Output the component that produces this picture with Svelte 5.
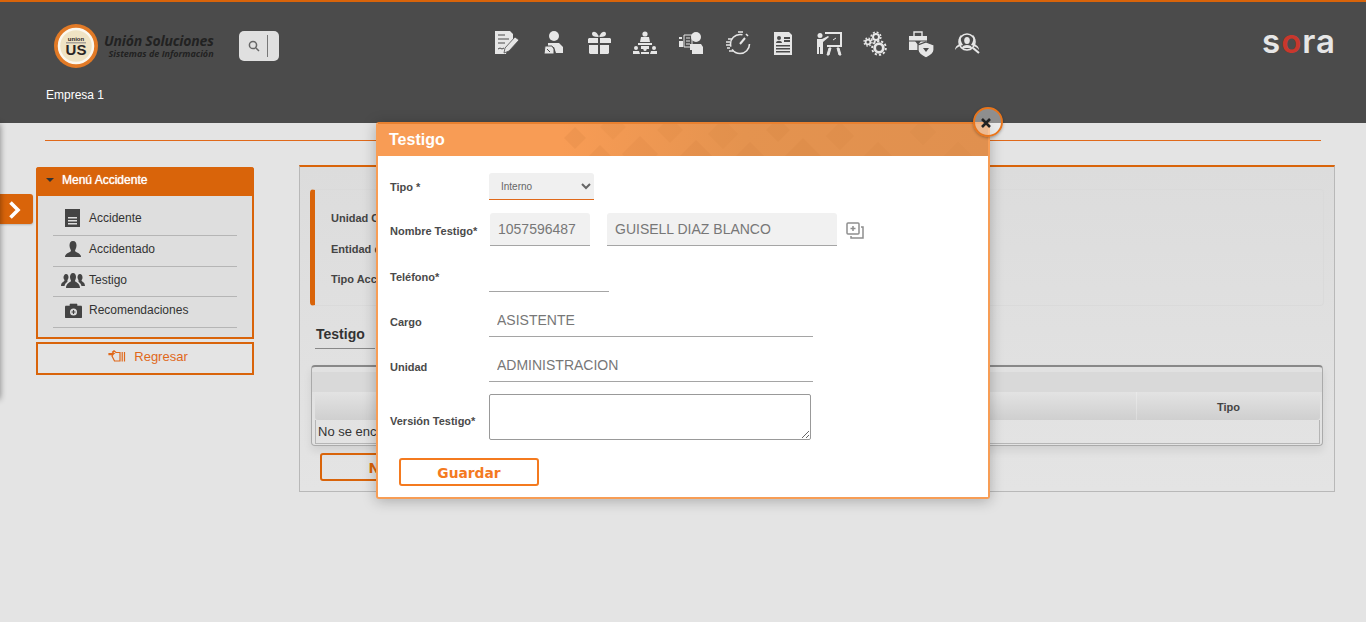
<script>
  const menu = ["Accidente", "Accidentado", "Testigo", "Recomendaciones"];
  const info = ["Unidad Centro Costo", "Entidad de Salud", "Tipo Accidente"];
  // diamonds on the modal title bar: x, y, half size, opacity
  const diamonds = [
    [197, 14, 11, 0.09], [235, 3, 13, 0.05], [222, 36, 15, 0.09], [262, 30, 18, 0.07],
    [292, 6, 13, 0.05], [318, 34, 18, 0.07], [345, 10, 15, 0.04], [372, 38, 20, 0.06],
    [400, 6, 12, 0.05], [425, 32, 18, 0.05], [462, 12, 14, 0.04], [500, 36, 18, 0.04],
    [545, 8, 13, 0.03], [580, 34, 16, 0.03]
  ];
</script>

<div class="page">
  <header class="topbar">
    <div class="brand-row">
      <div class="logo">
        <svg width="46" height="46" viewBox="0 0 46 46">
          <circle cx="23" cy="23" r="22" fill="#e27a26" />
          <circle cx="23" cy="23" r="17" fill="#efe3c4" stroke="#fbf8ef" stroke-width="2.500" />
          <text x="23" y="17.500" class="logo-small">union</text>
          <rect x="13" y="19" width="20" height="1.500" fill="#a9a39a" />
          <text x="23" y="32" class="logo-big">US</text>
        </svg>
        <div class="logo-text">
          <strong>Unión Soluciones</strong>
          <span>Sistemas de Información</span>
        </div>
      </div>
      <div class="search">
        <svg width="12" height="12" viewBox="0 0 12 12" fill="none" stroke="#666" stroke-width="1.500">
          <circle cx="5" cy="5" r="3.600" /><path d="M7.700 7.700L11 11" />
        </svg>
        <i></i>
      </div>
      <nav class="modules">
        <!-- document with pencil -->
        <svg viewBox="0 0 30 30"><path d="M3 3h15l3 3v8l-6 7-1 5H3z" /><path d="M6 7h7M6 11h11M6 15h7M6 21l2-1 2 1 2-1" stroke="#4b4b4b" stroke-width="1" fill="none" /><path d="M23 9l4 3-10 11-5 2 1-5z" stroke="#4b4b4b" stroke-width=".8" /></svg>
        <!-- person with file -->
        <svg viewBox="0 0 30 30"><circle cx="16" cy="8" r="5" /><path d="M10 15h11l4 4v6h-7l-2-6h-6z" /><path d="M7 18h7l2 3v5H6z" stroke="#4b4b4b" stroke-width="1" /><path d="M9 21l3 3" stroke="#4b4b4b" stroke-width="1" /></svg>
        <!-- gift -->
        <svg viewBox="0 0 30 30"><path d="M5 10h9v5H4v-4zM16 10h10l1 1v4H16zM5 17h9v9H6l-1-1zM16 17h9v8l-1 1h-8z" /><path d="M14 9c-4 0-6-1-6-3 0-3 4-3 6 1 1 1 1 2 0 2zM16 9c4 0 6-1 6-3 0-3-4-3-6 1-1 1-1 2 0 2z" /></svg>
        <!-- podium and audience -->
        <svg viewBox="0 0 30 30"><circle cx="15" cy="6" r="2.600" /><path d="M11 9h8l1 5H10zM8 15h14v2H8zM11 18h8v3h-8z" /><circle cx="6" cy="20" r="2" /><circle cx="15" cy="21.500" r="1.600" /><circle cx="24" cy="20" r="2" /><path d="M3 23h6l1 3H3zM11 24h8v2h-8zM21 23h6v3h-7z" /></svg>
        <!-- person with clipboard -->
        <svg viewBox="0 0 30 30"><circle cx="20" cy="9" r="5" /><path d="M14 16h11l2 3v7H16v-4h-2z" /><path d="M8 7h8v12H8z" fill="none" stroke="#e6e6e6" stroke-width="1" /><path d="M3 9h3v2H3zM3 13h4v6H3z" /><path d="M10 10h4M10 13h4M10 16h4" stroke="#e6e6e6" stroke-width="1" /></svg>
        <!-- stopwatch -->
        <svg viewBox="0 0 30 30" fill="none" stroke="#e6e6e6"><circle cx="18" cy="16" r="9.500" stroke-width="1.600" stroke-dasharray="24 3 20 13" /><path d="M18 16l5-6" stroke-width="2" /><path d="M16 4h5M24 6l2 2" stroke-width="1.600" /><path d="M10 11H6M8 14H4M9 17H4M8 20H5M11 23H7" stroke-width="1.400" /></svg>
        <!-- resume sheet -->
        <svg viewBox="0 0 30 30"><path d="M6 4h15l3 3v20H6z" /><circle cx="11" cy="10" r="2" fill="#4b4b4b" /><path d="M8 15c0-3 6-3 6 0zM16 9h6v2h-6zM16 12h6v2h-6zM8 17h14v1.400H8zM8 20h14v1.400H8zM8 23h14v1.400H8z" fill="#4b4b4b" /></svg>
        <!-- presenter and board -->
        <svg viewBox="0 0 30 30"><circle cx="6" cy="7.500" r="2.500" /><path d="M3 11h5l6-3 1 1-6 5v12H6v-7H5v7H3z" /><path d="M11 4h17v15H13v-2h13V6H11z" /><path d="M15 20h2l-2 7h-2zM23 20h2l2 7h-2zM19 12l3-2" stroke="#e6e6e6" /></svg>
        <!-- gears -->
        <svg viewBox="0 0 30 30" fill="none" stroke="#e6e6e6"><circle cx="8" cy="14" r="2.400" stroke-width="1.800" /><circle cx="8" cy="14" r="4" stroke-width="1.300" stroke-dasharray="1.600 1.550" /><circle cx="16" cy="9" r="3" stroke-width="2" /><circle cx="16" cy="9" r="4.900" stroke-width="1.400" stroke-dasharray="2 1.850" /><circle cx="19" cy="20" r="4.300" stroke-width="2.800" /><circle cx="19" cy="20" r="6.900" stroke-width="1.800" stroke-dasharray="2.300 2" /></svg>
        <!-- briefcase and shield -->
        <svg viewBox="0 0 30 30"><path d="M3 8h18v14H3z" /><path d="M8 8V4h8v4" fill="none" stroke="#e6e6e6" stroke-width="1.400" /><path d="M3 13h18" stroke="#4b4b4b" stroke-width="1" /><path d="M9 13h6l-3 4z" fill="#4b4b4b" /><path d="M20 14l8 3v5c0 4-4 6-8 8-4-2-8-4-8-8v-5z" stroke="#4b4b4b" stroke-width="1.200" /><path d="M17 20h6l-3 4z" fill="#4b4b4b" /></svg>
        <!-- magnifier over person -->
        <svg viewBox="0 0 30 30"><path d="M3 22c0-3 2-5 5-6l-1-4c0-3 1-4 2-5-1 4 0 7 2 10-3 1-6 2-8 5zM27 22c0-3-2-5-5-6l1-4c0-3-1-4-2-5 1 4 0 7-2 10 3 1 6 2 8 5z" /><circle cx="15" cy="14" r="8" fill="none" stroke="#e6e6e6" stroke-width="1.600" /><ellipse cx="15" cy="12.500" rx="2.800" ry="3.600" /><path d="M10 20c0-4 10-4 10 0z" /><path d="M21 20l6 5" stroke="#e6e6e6" stroke-width="2.200" /></svg>
      </nav>
      <div class="sora">s<b>o</b>ra</div>
    </div>
    <div class="company">Empresa 1</div>
  </header>

  <hr class="rule" />

  <div class="content">
    <aside class="sidebar">
      <div class="menu">
        <h2><i class="caret"></i>Menú Accidente</h2>
        <ul>
          {#each menu as item, i}
            <li>
              <span class="mi">
                {#if i === 0}
                  <svg width="16" height="18" viewBox="0 0 16 18"><path d="M0 0h15v18H0z" fill="#444" /><path d="M3 8h9v1.500H3zM3 11h9v1.500H3zM3 14h9v1.500H3z" fill="#ddd" /></svg>
                {:else if i === 1}
                  <svg width="16" height="16" viewBox="0 0 16 16"><path d="M8 0c2.500 0 3.500 2 3.500 4.500S10 9 10 10c0 1 6 2 6 6H0c0-4 6-5 6-6S4.500 7 4.500 4.500 5.500 0 8 0z" fill="#444" /></svg>
                {:else if i === 2}
                  <svg width="24" height="16" viewBox="0 0 24 16" fill="#444"><path d="M12 1c2 0 3 2 3 4s-1 3-1 4 5 2 5 7H5c0-5 5-6 5-7S9 7 9 5s1-4 3-4z" /><path d="M5 2c2 0 2.500 2 2.500 3.500S6 8 6.500 9 4 11 3.500 14H0c0-4 3.500-4.500 3.500-5.500S2.500 7 2.500 5.500 3.500 2 5 2zM19 2c-2 0-2.500 2-2.500 3.500S18 8 17.500 9s2.500 2 3 5H24c0-4-3.500-4.500-3.500-5.500s1-1 1-3S20.500 2 19 2z" /></svg>
                {:else}
                  <svg width="17" height="15" viewBox="0 0 17 15"><path d="M5 3V1h7v2M1 3h15a1 1 0 0 1 1 1v10a1 1 0 0 1-1 1H1a1 1 0 0 1-1-1V4a1 1 0 0 1 1-1z" fill="#444" stroke="#444" stroke-width=".6" /><circle cx="8.500" cy="9" r="3.500" fill="#ddd" /><path d="M7.900 7h1.200v1.400h1.400v1.200H9.100V11H7.900V9.600H6.500V8.400h1.400z" fill="#444" /></svg>
                {/if}
              </span>
              {item}
            </li>
          {/each}
        </ul>
      </div>
      <button class="back">
        <svg width="18" height="13" viewBox="0 0 18 13" fill="none" stroke="#e0681a" stroke-width="1.200"><path d="M12 2.500H8L6 .8 4.500 2 6 3.500H1v1.200h4L4 6l1 2 1.500 3H12zM14.200 2v9.500M16.500 2v9.500" /></svg>
        Regresar
      </button>
    </aside>

    <main class="panel">
      <section class="info">
        {#each info as label}
          <div class="info-line">{label}</div>
        {/each}
      </section>
      <h3 class="section-title">Testigo</h3>
      <div class="grid">
        <div class="band"></div>
        <div class="grid-head">
          <span class="grow"></span>
          <span class="col-tipo">Tipo</span>
        </div>
        <div class="grid-row">No se encontraron registros</div>
      </div>
      <button class="outline new">Nuevo</button>
    </main>
  </div>

  <button class="drawer-tab" aria-label="Abrir">
    <svg width="14" height="18" viewBox="0 0 14 18" fill="none" stroke="#fff" stroke-width="3.600"><path d="M2.500 1.500L10 9l-7.500 7.500" /></svg>
  </button>
  <div class="drawer-edge"></div>

  <div class="modal">
    <div class="modal-title">
      <svg class="pattern" width="610" height="32" viewBox="0 0 610 32">
        {#each diamonds as [x, y, s, o]}
          <path d="M{x} {y - s}L{x + s} {y}L{x} {y + s}L{x - s} {y}z" fill="#a5561c" opacity={o} />
        {/each}
      </svg>
      <span>Testigo</span>
    </div>
    <form class="modal-body">
      <div class="field r-tipo">
        <label for="tipo">Tipo *</label>
        <select id="tipo"><option>Interno</option></select>
      </div>
      <div class="field r-nombre">
        <label for="doc">Nombre Testigo*</label>
        <input id="doc" class="filled doc" value="1057596487" readonly />
        <input class="filled name" value="GUISELL DIAZ BLANCO" readonly aria-label="Nombre" />
        <svg class="pick" width="18" height="17" viewBox="0 0 18 17" fill="none" stroke="#8e8e8e" stroke-width="1.500"><rect x="1" y="1" width="12" height="11" rx="1" /><path d="M7 4v5M4.500 6.500h5" /><path d="M15 5h2v11H5v-2" /></svg>
      </div>
      <div class="field r-tel">
        <label for="tel">Teléfono*</label>
        <input id="tel" class="line tel" />
      </div>
      <div class="field r-line">
        <label for="cargo">Cargo</label>
        <input id="cargo" class="line wide" value="ASISTENTE" readonly />
      </div>
      <div class="field r-line">
        <label for="unidad">Unidad</label>
        <input id="unidad" class="line wide" value="ADMINISTRACION" readonly />
      </div>
      <div class="field r-area">
        <label for="version">Versión Testigo*</label>
        <textarea id="version"></textarea>
      </div>
      <button type="button" class="outline save">Guardar</button>
    </form>
    <button class="close" aria-label="Cerrar">
      <svg width="10" height="10" viewBox="0 0 10 10" stroke="#222" stroke-width="2.600"><path d="M1 1l8 8M9 1l-8 8" /></svg>
    </button>
  </div>
</div>

<style>
  :global(body) {
    background: #e4e4e4;
    overflow: hidden;
  }

  .page {
    position: relative;
    height: 622px;
    overflow: hidden;
    font-family: "Liberation Sans", Arial, sans-serif;
    color: #333;
  }

  .topbar {
    height: 121px;
    background: #4b4b4b;
    border-top: 2px solid #d9640a;
  }

  .brand-row {
    display: flex;
    align-items: flex-start;
    height: 78px;
  }

  .logo {
    display: flex;
    align-items: center;
    margin: 21px 0 0 53px;
    width: 186px;
  }

  .logo-small {
    font: 700 6px "Liberation Sans", Arial, sans-serif;
    text-anchor: middle;
    fill: #2a2525;
  }

  .logo-big {
    font: 700 15px "Liberation Sans", Arial, sans-serif;
    text-anchor: middle;
    fill: #2a2525;
  }

  .logo-text {
    margin-left: 5px;
    font-family: "Open Sans", sans-serif;
    font-style: italic;
    color: #222;
    text-align: right;
    line-height: 11px;
  }

  .logo-text strong {
    display: block;
    font-size: 14px;
    line-height: 14px;
    letter-spacing: -0.2px;
  }

  .logo-text span {
    display: block;
    font-size: 9px;
    font-weight: 700;
  }

  .search {
    display: flex;
    align-items: center;
    width: 40px;
    height: 30px;
    margin-top: 29px;
    padding-left: 9px;
    box-sizing: border-box;
    background: #e0e0e0;
    border-radius: 5px;
  }

  .search i {
    width: 1px;
    height: 22px;
    margin-left: 7px;
    background: #777;
  }

  .modules {
    display: flex;
    gap: 16px;
    margin: 26px 0 0 213px;
    fill: #e6e6e6;
  }

  .modules svg {
    width: 30px;
    height: 30px;
  }

  .sora {
    margin: 17px 0 0 auto;
    padding-right: 30px;
    font-family: Inter, sans-serif;
    font-size: 33px;
    line-height: 44px;
    font-weight: 600;
    color: #e6e6e6;
    letter-spacing: 1px;
  }

  .sora b {
    font-weight: 600;
    color: #c9372c;
  }

  .company {
    margin-left: 46px;
    font-size: 12px;
    line-height: 14px;
    color: #fff;
    position: relative;
    top: 8px;
  }

  .rule {
    height: 1px;
    margin: 17px 45px 0 45px;
    border: 0;
    background: #e0691a;
  }

  .content {
    display: flex;
    align-items: flex-start;
    margin: 24px 31px 0 36px;
  }

  .sidebar {
    width: 218px;
    margin-top: 2px;
    margin-right: 45px;
    flex: none;
  }

  .menu {
    border: 2px solid #d9640a;
    border-top: 0;
    border-radius: 3px 3px 0 0;
    background: #dedede;
  }

  .menu h2 {
    display: flex;
    align-items: center;
    box-sizing: border-box;
    height: 29px;
    margin: 0 -2px;
    padding: 0 0 4px 10px;
    background: #d9640a;
    border-radius: 3px 3px 0 0;
    color: #fff;
    font-size: 12px;
    font-weight: 400;
    text-shadow: 0 0 1px #fff;
  }

  .caret {
    width: 0;
    height: 0;
    margin-right: 8px;
    border: 4px solid transparent;
    border-top: 4px solid #333;
    border-bottom: 0;
  }

  ul {
    list-style: none;
    margin: 0;
    padding: 9px 15px 9px 15px;
  }

  li {
    display: flex;
    align-items: center;
    height: 26px;
    padding-bottom: 4px;
    border-bottom: 1px solid #b5b5b5;
    font-size: 12px;
    color: #333;
  }

  li:nth-child(3) {
    padding-bottom: 3px;
  }

  .mi {
    display: flex;
    justify-content: center;
    box-sizing: border-box;
    width: 36px;
    padding-left: 4px;
  }

  .back {
    display: flex;
    align-items: center;
    justify-content: center;
    gap: 8px;
    width: 100%;
    height: 33px;
    margin-top: 3px;
    border: 2px solid #d9640a;
    background: transparent;
    color: #e0681a;
    font: 13px "Liberation Sans", Arial, sans-serif;
    padding: 0 0 5px 6px;
  }

  .panel {
    flex: 1;
    box-sizing: border-box;
    height: 327px;
    padding: 22px 10px 0;
    border: 1px solid #b8b8b8;
    border-top: 2px solid #d9640a;
    background: linear-gradient(#dcdcdc, #e4e4e4);
  }

  .info {
    display: flex;
    flex-direction: column;
    box-sizing: border-box;
    height: 117px;
    padding: 21px 0 0 16px;
    gap: 16.500px;
    border: 1px solid #dadada;
    border-left: 5px solid #d9640a;
    border-radius: 4px;
  }

  .info-line {
    font-size: 11px;
    line-height: 14px;
    font-weight: 700;
    color: #444;
  }

  .section-title {
    margin: 18px 0 0 5px;
    padding: 0 0 4px 1px;
    box-sizing: content-box;
    width: 59px;
    font-size: 14px;
    line-height: 20px;
    font-weight: 700;
    color: #333;
    border-bottom: 1px solid #888;
  }

  .grid {
    box-sizing: border-box;
    height: 81px;
    margin: 16px 1px 0 1px;
    padding: 5px 2px 0 3px;
    border: 1px solid #aaa;
    border-top: 2px solid #888;
    border-radius: 4px;
    box-shadow: 0 5px 8px rgba(0, 0, 0, 0.08);
  }

  .band {
    height: 20px;
    margin: 0 -2px 0 -3px;
    background: #d9d9d9;
  }

  .grid-head {
    display: flex;
    align-items: center;
    height: 28px;
    background: linear-gradient(#e3e3e3, #cfcfcf);
    border-radius: 0 0 3px 3px;
    font-size: 11px;
    font-weight: 700;
    color: #444;
  }

  .grow {
    flex: 1;
    align-self: stretch;
    border-right: 1px solid rgba(255, 255, 255, 0.25);
  }

  .col-tipo {
    box-sizing: border-box;
    width: 183px;
    padding: 2px 0 0 0;
    text-align: center;
  }

  .grid-row {
    box-sizing: border-box;
    height: 24px;
    padding: 4px 0 0 2px;
    border: 1px solid #b5b5b5;
    border-top: 0;
    font-size: 13px;
    line-height: 15px;
    color: #333;
  }

  .outline {
    box-sizing: border-box;
    width: 140px;
    height: 28px;
    padding: 1px 0 0;
    border: 2px solid #d9640a;
    border-radius: 3px;
    background: transparent;
    color: #d9640a;
    font: 700 13.800px "DejaVu Sans", Verdana, sans-serif;
  }

  .new {
    display: block;
    width: 146px;
    margin: 7px 0 0 10px;
  }

  .drawer-tab {
    position: absolute;
    left: 0;
    top: 194px;
    width: 33px;
    height: 30px;
    padding: 0 0 0 8px;
    border: 0;
    border-radius: 0 3px 3px 0;
    background: #d9640a;
    text-align: left;
    box-shadow: 0 1px 2px rgba(0, 0, 0, 0.2);
  }

  .drawer-tab svg {
    display: block;
    margin-top: 1px;
  }

  .drawer-edge {
    position: absolute;
    left: -10px;
    top: 124px;
    width: 10px;
    height: 275px;
    box-shadow: 0 0 6px rgba(0, 0, 0, 0.45);
  }

  .modal {
    position: absolute;
    left: 376px;
    top: 122px;
    box-sizing: border-box;
    width: 614px;
    height: 376.500px;
    border: 2px solid #f79d55;
    border-top-color: #e8802f;
    border-radius: 3px;
    background: #fff;
    box-shadow: 0 2px 14px rgba(0, 0, 0, 0.25);
  }

  .modal-title {
    position: relative;
    height: 32px;
    background: linear-gradient(90deg, #f89c55 30%, #e4934f 60%, #e0904f);
    overflow: hidden;
  }

  .modal-title span {
    position: relative;
    display: block;
    padding-left: 11px;
    font-size: 16px;
    line-height: 31px;
    font-weight: 700;
    color: #fff;
  }

  .pattern {
    position: absolute;
    left: 0;
    top: 0;
  }

  .modal-body {
    padding: 17px 0 0 12px;
  }

  .field {
    display: flex;
    align-items: center;
  }

  .field label {
    flex: none;
    width: 99px;
    padding-top: 3px;
    font-size: 11px;
    font-weight: 700;
    color: #4a4a4a;
  }

  .r-tipo {
    height: 27px;
  }

  .r-tipo label {
    padding-top: 1px;
  }

  .r-nombre {
    height: 33px;
    margin-top: 13px;
  }

  .r-tel {
    height: 34px;
    margin-top: 12px;
  }

  .r-line {
    height: 33px;
    margin-top: 12px;
  }

  .r-area {
    height: 46px;
    margin-top: 12px;
  }

  .r-area label {
    padding-top: 8px;
  }

  select {
    width: 105px;
    height: 27px;
    padding-left: 8px;
    border: 0;
    border-bottom: 1px solid #e0691a;
    border-radius: 3px 3px 0 0;
    background: #f0f0f0;
    color: #666;
    font: 10px "Liberation Sans", Arial, sans-serif;
  }

  input {
    box-sizing: border-box;
    height: 33px;
    padding: 0 8px;
    border: 0;
    border-bottom: 1px solid #a5a5a5;
    background: transparent;
    color: #777;
    font: 14px "Liberation Sans", Arial, sans-serif;
    outline: 0;
  }

  .filled {
    background: #f1f1f1;
    border-radius: 3px 3px 0 0;
  }

  .doc {
    width: 100px;
    margin-left: 1px;
  }

  .name {
    width: 230px;
    margin-left: 17px;
  }

  .pick {
    margin: 2px 0 0 9px;
  }

  .tel {
    width: 120px;
    height: 34px;
  }

  .wide {
    width: 324px;
  }

  textarea {
    box-sizing: border-box;
    width: 322px;
    height: 46px;
    border: 1px solid #999;
    border-radius: 2px;
    outline: 0;
  }

  .save {
    display: block;
    margin: 18px 0 0 9px;
    border-color: #f47a1f;
    color: #f47a1f;
  }

  .close {
    position: absolute;
    right: -15px;
    top: -17px;
    display: flex;
    align-items: center;
    justify-content: center;
    box-sizing: border-box;
    width: 30px;
    height: 30px;
    padding: 2px 4px 0 0;
    border: 2px solid #e8751c;
    border-radius: 50%;
    background: rgba(255, 255, 255, 0.38);
    box-shadow: 0 1px 3px rgba(0, 0, 0, 0.3);
  }
</style>
